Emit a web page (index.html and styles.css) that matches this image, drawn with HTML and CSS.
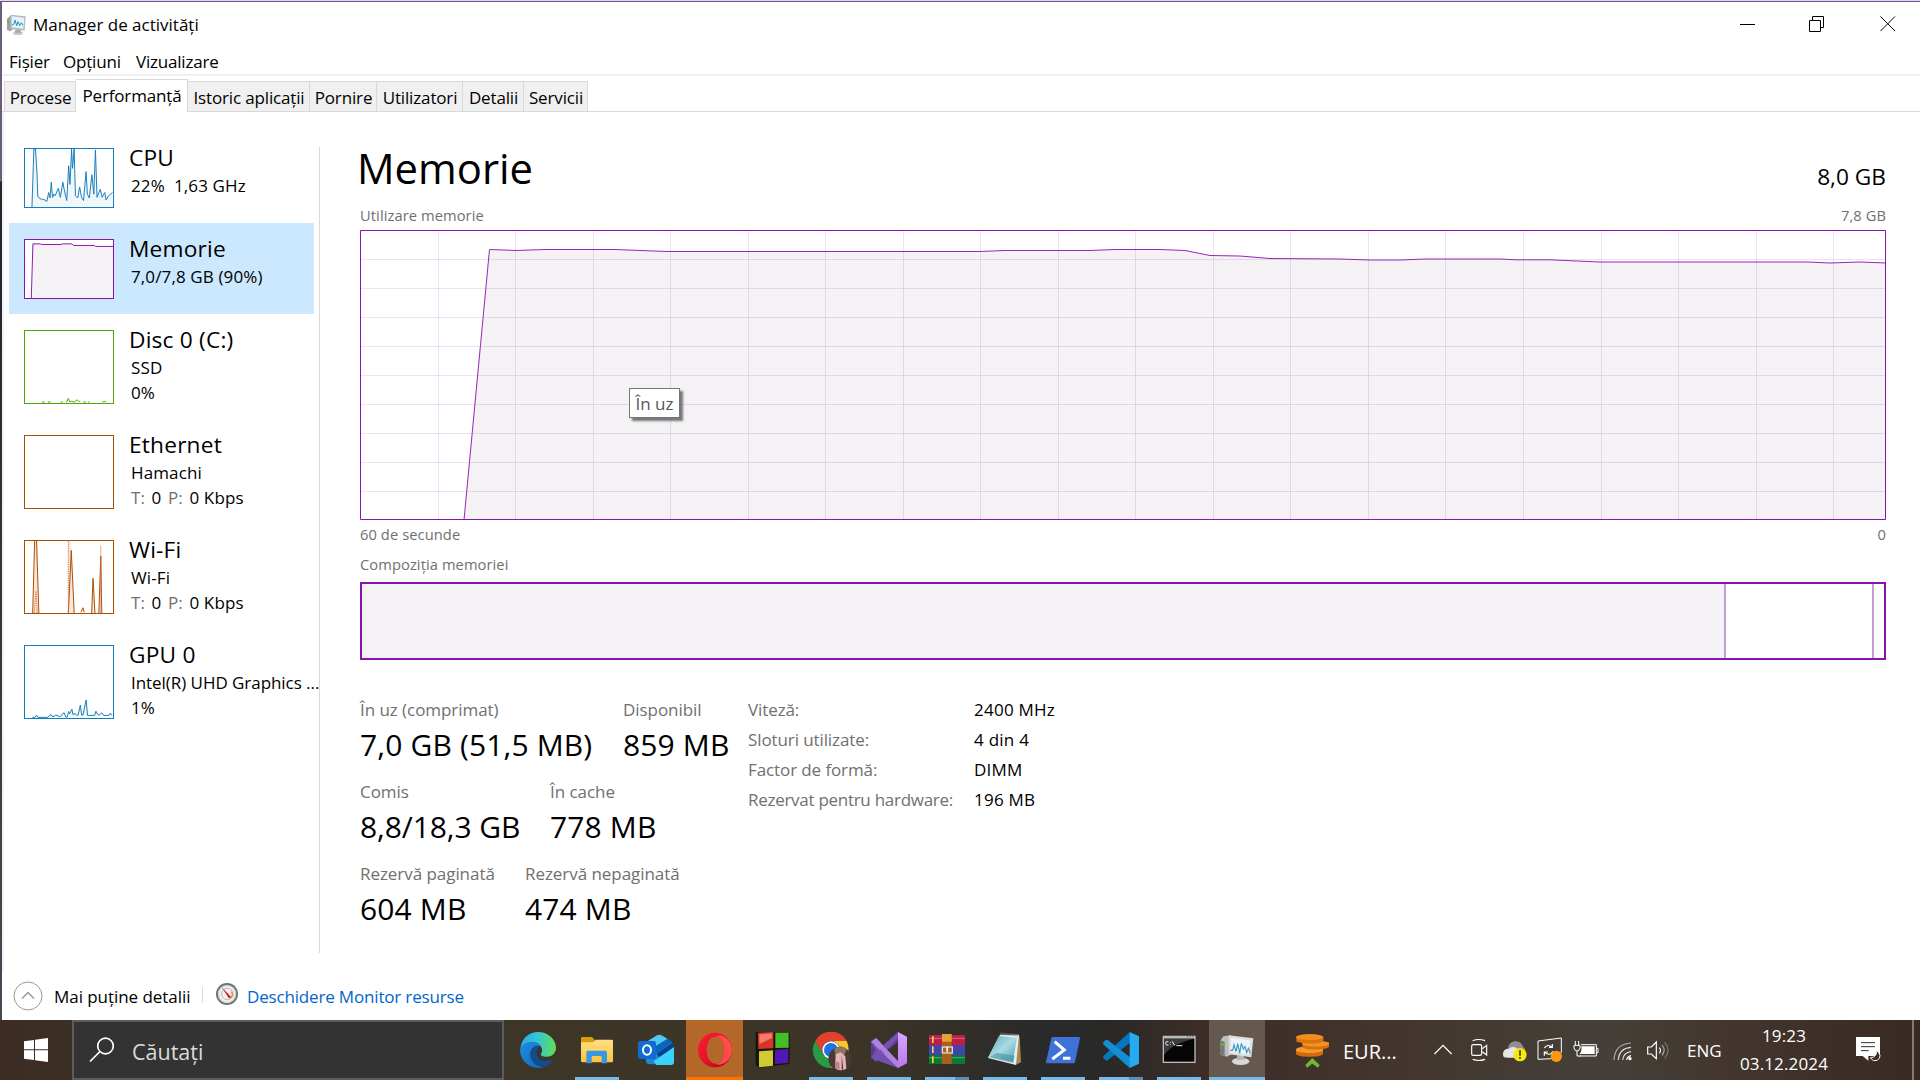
FILE: index.html
```html
<!DOCTYPE html>
<html lang="ro">
<head>
<meta charset="utf-8">
<title>Manager de activități</title>
<link rel="stylesheet" href="styles.css">
</head>
<body>
<svg class="defs" width="0" height="0" aria-hidden="true">
  <defs>
    <linearGradient id="edgeTop" x1="0" x2="1"><stop offset="0" stop-color="#2aa9e8"/><stop offset=".5" stop-color="#35c6d4"/><stop offset="1" stop-color="#62e04c"/></linearGradient>
    <linearGradient id="edgeBlue" x1="0" x2="1" y2="1"><stop offset="0" stop-color="#1f8fe0"/><stop offset="1" stop-color="#0f65bd"/></linearGradient>
    <linearGradient id="folder" y2="1" x2="0"><stop offset="0" stop-color="#ffe084"/><stop offset="1" stop-color="#f8c441"/></linearGradient>
    <linearGradient id="opera" x2="1" y2="1"><stop offset="0" stop-color="#ff1b2d"/><stop offset=".5" stop-color="#e3142b"/><stop offset="1" stop-color="#a70014"/></linearGradient>
    <linearGradient id="vsr" y2="1" x2="0"><stop offset="0" stop-color="#d6a8ff"/><stop offset="1" stop-color="#b877ee"/></linearGradient>
    <linearGradient id="note" x2="1" y2="1"><stop offset="0" stop-color="#5fa9b8"/><stop offset=".5" stop-color="#a9dbe3"/><stop offset="1" stop-color="#4c9dab"/></linearGradient>
    <symbol id="taskmgr" viewBox="0 0 108 108">
      <path d="M5 25l8-12 22-3v58l-12 6-18-6z" fill="#bdbdbd"/><path d="M5 25l12 5v43l-12-6z" fill="#777"/><path d="M6 34h8v7H6z" fill="#57d300"/>
      <ellipse cx="65" cy="88" rx="26" ry="11" fill="#d8d8d6"/><path d="M54 70h20l2 14H54z" fill="#b5b5b2"/>
      <path d="M29 10l74 9-6 57-68-9z" fill="#dededb"/><path d="M36 18l58 7-5 43-54-7z" fill="#e9f5fb"/>
      <path d="M34 55h7l4-17 6 21 5-24 6 29 5-30 6 17 5-7 5 18 5-13 6 15" fill="none" stroke="#3d97c5" stroke-width="3.4"/>
    </symbol>
    <symbol id="taskmgr-small" viewBox="0 0 63 66">
      <path d="M3 14l9-8 8-1v42l-8 5-9-5z" fill="#9d9f9c"/><path d="M4 22h5v5H4z" fill="#57c300"/>
      <ellipse cx="36" cy="57" rx="15" ry="6" fill="#c9c9c6"/><path d="M28 46h15l2 10H27z" fill="#a9a9a6"/>
      <path d="M13 2l46 5-3 43-43-5z" fill="#b8bab8"/><path d="M17 7l38 4-3 33-35-4z" fill="#e3f2fb"/>
      <path d="M17 33l6-2 4-13 5 17 4-12 5 12 5-9 5 8" fill="none" stroke="#2d8fc4" stroke-width="3"/>
    </symbol>
  </defs>
</svg>

<div class="desktop">
  <div class="edge"></div>
  <main class="window">
    <header class="titlebar">
      <svg class="app-icon" width="21" height="22"><use href="#taskmgr-small"/></svg>
      <span class="title">Manager de activități</span>
      <svg class="controls" width="180" height="20" viewBox="0 0 180 20" fill="none" stroke="#000">
        <path d="M0 9.500h15M69.500 5.500h11v11h-11zM72.500 5v-3.500h11v11h-3M140.500 1.500l14.500 14.500M155 1.500l-14.500 14.500"/>
      </svg>
    </header>
    <nav class="menubar"><span>Fișier</span><span>Opțiuni</span><span>Vizualizare</span></nav>
    <nav class="tabs">
      <span class="tab t1">Procese</span><span class="tab t2 active">Performanță</span><span class="tab t3">Istoric aplicații</span><span class="tab t4">Pornire</span><span class="tab t5">Utilizatori</span><span class="tab t6">Detalii</span><span class="tab t7">Servicii</span>
    </nav>

    <div class="content">
      <aside class="sidebar">
        <section class="resource cpu">
          <svg class="thumb" viewBox="0 0 270 180">
            <path d="M20 180L26 0h5l5 80 2 66 6 8 8 2 8 2 6 5 6-28 4 17 4-49 4 47 4-10 4 5 10-23 6 28 8-47 4 22 8 35 6-108 4 58 5-110 3 60 5-60 4 145 7 7 6-34 6 32 6 10 8-90 4 70 6 12 8-72 6 60 5-137 5 147 10-25 6 25 8-15 4 23 8-13 6-5 6-5v45z" class="plot"/>
            <path d="M20 180L26 0h5l5 80 2 66 6 8 8 2 8 2 6 5 6-28 4 17 4-49 4 47 4-10 4 5 10-23 6 28 8-47 4 22 8 35 6-108 4 58 5-110 3 60 5-60 4 145 7 7 6-34 6 32 6 10 8-90 4 70 6 12 8-72 6 60 5-137 5 147 10-25 6 25 8-15 4 23 8-13 6-5 6-5" class="line"/>
          </svg>
          <div class="info"><h2>CPU</h2><p class="pre">22%  1,63 GHz</p></div>
        </section>
        <section class="resource memory selected">
          <svg class="thumb" viewBox="0 0 270 180">
            <path d="M18 180L23 12h22l5 2h60l4-2h30l5 5h65l4 3h54v160z" class="plot"/>
            <path d="M18 180L23 12h22l5 2h60l4-2h30l5 5h65l4 3h54" class="line"/>
          </svg>
          <div class="info"><h2>Memorie</h2><p>7,0/7,8 GB (90%)</p></div>
        </section>
        <section class="resource tall disk">
          <svg class="thumb" viewBox="0 0 270 222"><path d="M52 219h8M70 219h8M109 219h7M125 219l4-2 4-9 4 10 6-1 9 2 8-7 5 5h5M179 219h8M193 219h5M238 219l6-2 6 2" class="line"/></svg>
          <div class="info"><h2>Disc 0 (C:)</h2><p>SSD</p><p>0%</p></div>
        </section>
        <section class="resource tall net">
          <svg class="thumb" viewBox="0 0 270 222"></svg>
          <div class="info"><h2>Ethernet</h2><p>Hamachi</p><p><i>T:</i> 0 <i>P:</i> 0 Kbps</p></div>
        </section>
        <section class="resource tall net">
          <svg class="thumb" viewBox="0 0 270 222">
            <path d="M23 222L29 0h8l6 222zM133 222L133 0h8l10 222zM204 222l5-107 6 107zM226 222l7-200 4 200z" class="plot"/>
            <path d="M23 222L29 0M35 0l7 222M133 222l9-193 9 193M172 220l6-14 4 14M205 222l4-107 6 107M227 222l6-175 3 175" class="line"/>
            <path d="M28 222l5-68 4 68M133 222V0M233 222V14" class="line dotted"/>
          </svg>
          <div class="info"><h2>Wi-Fi</h2><p>Wi-Fi</p><p><i>T:</i> 0 <i>P:</i> 0 Kbps</p></div>
        </section>
        <section class="resource tall gpu">
          <svg class="thumb" viewBox="0 0 270 222">
            <path d="M22 220h8l5-7 4 7h30l10-9 6 8 8-5h8l4 5 6-4 4-6 5-3 5 13 4 1 5-18 3 7 7-14 3 16 7-3 4 5h5l7-31 4 31h4l10-47 4 48h22l4-13 5 9 5 3 8-7 6 8h16l5-7 3 7" class="plot"/>
            <path d="M22 220h8l5-7 4 7h30l10-9 6 8 8-5h8l4 5 6-4 4-6 5-3 5 13 4 1 5-18 3 7 7-14 3 16 7-3 4 5h5l7-31 4 31h4l10-47 4 48h22l4-13 5 9 5 3 8-7 6 8h16l5-7 3 7" class="line"/>
          </svg>
          <div class="info"><h2>GPU 0</h2><p class="device">Intel(R) UHD Graphics ...</p><p>1%</p></div>
        </section>
      </aside>

      <article class="detail">
        <div class="heading"><h1>Memorie</h1><span>8,0 GB</span></div>
        <div class="caption"><span>Utilizare memorie</span><span>7,8 GB</span></div>
        <div class="chart">
          <svg width="1526" height="290" viewBox="0 0 1526 290" fill="none">
            <path fill="#f4f2f5" d="M104 290L129.500 19.500 156 20.500l29-1h70l52 2h313l25-1h85l25-1h45l25 1 25 5 30 .5 30 2.500 70 .5 30 1h30l25-1h75l17 .8h33l50 2.200h208l22 1 30-1 26 1V290z"/>
            <path class="grid" d="M78.500 0v290M155.500 0v290M233.500 0v290M310.500 0v290M388.500 0v290M465.500 0v290M543.500 0v290M620.500 0v290M698.500 0v290M775.500 0v290M853.500 0v290M930.500 0v290M1008.500 0v290M1085.500 0v290M1163.500 0v290M1241.500 0v290M1318.500 0v290M1396.500 0v290M1473.500 0v290M0 29.500h1526M0 58.500h1526M0 87.500h1526M0 116.500h1526M0 145.500h1526M0 174.500h1526M0 203.500h1526M0 232.500h1526M0 261.500h1526"/>
            <path stroke="#9528b4" d="M104 290L129.500 19.500 156 20.500l29-1h70l52 2h313l25-1h85l25-1h45l25 1 25 5 30 .5 30 2.500 70 .5 30 1h30l25-1h75l17 .8h33l50 2.200h208l22 1 30-1 26 1"/>
            <path stroke="#8b12ae" d="M.5.5h1525v289H.5z"/>
          </svg>
          <div class="tooltip">În uz</div>
        </div>
        <div class="caption axis"><span>60 de secunde</span><span>0</span></div>
        <div class="caption comp"><span>Compoziția memoriei</span></div>
        <div class="composition"><div class="used"></div><div class="standby"></div></div>
        <div class="stats">
          <div class="big">
            <div class="pair"><dl class="w1"><dt>În uz (comprimat)</dt><dd>7,0 GB (51,5 MB)</dd></dl><dl><dt>Disponibil</dt><dd>859 MB</dd></dl></div>
            <div class="pair"><dl class="w2"><dt>Comis</dt><dd class="commit">8,8/18,3 GB</dd></dl><dl><dt>În cache</dt><dd>778 MB</dd></dl></div>
            <div class="pair"><dl class="w3"><dt>Rezervă paginată</dt><dd>604 MB</dd></dl><dl><dt>Rezervă nepaginată</dt><dd>474 MB</dd></dl></div>
          </div>
          <div class="small">
            <span>Viteză:</span><b>2400 MHz</b>
            <span>Sloturi utilizate:</span><b>4 din 4</b>
            <span>Factor de formă:</span><b>DIMM</b>
            <span class="long">Rezervat pentru hardware:</span><b>196 MB</b>
          </div>
        </div>
      </article>
    </div>

    <footer class="footer">
      <svg class="collapse" width="30" height="30" viewBox="0 0 30 30" fill="none"><circle cx="15" cy="15" r="14" stroke="#979797"/><path d="M9 17.500l6-6 6 6" stroke="#979797" stroke-width="1.500"/></svg>
      <span class="less">Mai puține detalii</span>
      <span class="divider"></span>
      <svg class="gauge" width="24" height="24" viewBox="0 0 72 72"><circle cx="36" cy="36" r="33" fill="#68716f"/><circle cx="36" cy="36" r="28" fill="#ccd0ce"/><circle cx="36" cy="36" r="24" fill="#f3f0ed"/><circle cx="37" cy="36" r="17" fill="none" stroke="#b9b9b7" stroke-width="3"/><path d="M49 29q8 10-3 20" fill="none" stroke="#f08a2c" stroke-width="4"/><path d="M19 14l29 31-6 4z" fill="#c90f1a"/></svg>
      <a>Deschidere Monitor resurse</a>
    </footer>
  </main>
</div>

<div class="taskbar">
  <div class="start"><svg width="24" height="24" viewBox="0 0 24 24" fill="#fff"><path d="M0 3.300L10 2v9.300H0zM11 1.800L24 0v11.300H11zM0 12.300h10V22L0 20.700zM11 12.300h13V24L11 22.200z"/></svg></div>
  <div class="search">
    <svg width="26" height="26" viewBox="0 0 26 26" fill="none" stroke="#fff" stroke-width="1.700"><circle cx="16.500" cy="9" r="7.800"/><path d="M11 14.500L1 24.500"/></svg>
    <span>Căutați</span>
  </div>
  <div class="apps">
    <div class="app wide"><svg viewBox="0 0 108 108">
      <path d="M1 50C4 20 26 0 54 0c32 0 54 24 54 47 0 17-13 27-28 27-13 0-19-4-17-9 5-5 5-17-4-25C45 26 14 27 1 50z" fill="url(#edgeTop)"/>
      <path d="M0 56c0-15 17-27 35-27 15 0 24 6 27 13-17-3-31 8-31 25 0 24 22 40 45 37-33 14-74-9-76-48z" fill="url(#edgeBlue)"/>
      <path d="M52 41c-14 2-22 13-21 27 1 22 22 38 43 36 12-4 21-12 27-22-20 10-48 5-51-16-1-8 0-15 9-22-2-2-4-3-7-3z" fill="#134d8e"/></svg></div>
    <div class="app wide run"><svg viewBox="0 0 108 108"><path d="M6 18q0-3 4-3h29l8 9v12H6z" fill="#db9b0c"/><path d="M6 31h36l8-8h48q4 0 4 4v60q0 4-4 4H10q-4 0-4-4z" fill="url(#folder)"/><path d="M22 94V62q0-6 6-6h50q6 0 6 6v32H68V76q0-4-4-4H42q-4 0-4 4v18z" fill="#3a96dd"/></svg></div>
    <div class="app wide"><svg viewBox="0 0 108 108"><path d="M21 35L64 9l44 30v48q0 10-10 10H36q-12 0-12-10z" fill="#2484dc"/><path d="M28 28L57 10q8-4 16 1l16 10-49 31z" fill="#54c7ef"/><path d="M45 47l44-27 15 11-47 33z" fill="#0866bd"/><path d="M55 66l49-34q4 3 4 9v7L64 76z" fill="#093e89"/><path d="M47 88l61-43v45q0 9-9 9H55z" fill="#3bd1fa"/><rect y="27" width="54" height="54" rx="7" fill="#0f6cd4"/><ellipse cx="27" cy="54" rx="12" ry="14" fill="none" stroke="#fff" stroke-width="6"/></svg></div>
    <div class="app hot"><svg viewBox="0 0 108 108"><path fill="url(#opera)" fill-rule="evenodd" d="M54 2C24 2 3 26 3 54s21 52 51 52 51-24 51-52S84 2 54 2zm2 12c18 0 25 20 25 40S74 95 56 95 29 75 29 54s9-40 27-40z"/><path fill="#ff4b4b" d="M56 14c18-12 49 9 49 40S74 106 56 95c18 0 25-20 25-41S74 14 56 14z"/></svg></div>
    <div class="app"><svg viewBox="0 0 108 108"><path d="M2 0l102 2v93L12 108 2 98z" fill="#15150f"/><path d="M9 2l46-2v49L10 51z" fill="#db3328"/><path d="M61 2h40v45l-40 1z" fill="#45bd27"/><path d="M12 58l42-3v46l-42 5z" fill="#d2ca33"/><path d="M60 54l40-3v42l-40 3z" fill="#5318b4"/><path d="M13 7l38-3v14L13 36z" fill="#f47b6b"/></svg></div>
    <div class="app run"><svg viewBox="0 0 108 108"><path d="M7 27A54 54 0 0 1 101 27H54a27 27 0 0 0-25 38z" fill="#e44030"/><path d="M7 27a54 54 0 0 0 47 81l24-42a27 27 0 0 1-49-2z" fill="#299b47"/><path d="M101 27H54a27 27 0 0 1 24 40l-24 41c45-2 63-46 47-81z" fill="#fbc72d"/><circle cx="54" cy="54" r="26" fill="#fff"/><circle cx="54" cy="54" r="21" fill="#1a73e8"/><circle cx="81" cy="80" r="35" fill="#493a34"/><path d="M64 51q20-16 37 0l-8 20-8-7-17 8z" fill="#8f765e"/><path d="M68 67l15-6 14 12 3 37q-20 10-34-2z" fill="#dfb8b7"/><path d="M66 88l13 3 1 22-14-5z" fill="#c77c98"/><path d="M86 67l5 45-5 2z" fill="#6b2f3c"/></svg></div>
    <div class="app run"><svg viewBox="0 0 108 108"><path d="M0 29l13-7 68 66v20L0 79z" fill="#7350ac"/><path d="M0 79V29l15 25zM81 0L41 38l14 13 26-22z" fill="#5c3c91"/><path d="M0 29l15-11 66 70v20L0 29z" fill="#a77be2"/><path d="M15 89L81 18V0L40 37 5 80z" fill="#7651b4"/><path d="M4 28l12-9 66 71v18z" fill="#ae81e5"/><path d="M81 0l27 14v80l-27 14z" fill="url(#vsr)"/></svg></div>
    <div class="app run stacked"><svg viewBox="0 0 108 108"><path d="M0 9h108v30H0z" fill="#bd1e43"/><path d="M0 39h108v30H0z" fill="#4343ad"/><path d="M0 69h108v27H0z" fill="#087a35"/><path d="M0 17h108v4H0zM0 75h108v4H0z" fill="#ffffff44"/><path d="M9 13h5v20H9zM9 43h5v20H9zM9 73h5v20H9z" fill="#f5d33c"/><path d="M39 6h29v90H39z" fill="#ac5f19"/><path d="M39 6h29v23H39z" fill="#dda635"/><rect x="40" y="45" width="30" height="18" fill="none" stroke="#ddd" stroke-width="4"/><path d="M52 45h5v14h-5z" fill="#fff"/></svg></div>
    <div class="app run"><svg viewBox="0 0 108 108"><path d="M98 12l4 79-16 8-5-80z" fill="#a9874d"/><path d="M39 8h57l-9 91L3 78z" fill="#e8eff0"/><path d="M36 12l54 5-12 72L4 76z" fill="url(#note)"/><path d="M30 62l53 9-4 23-71-18z" fill="#3d8f9c88"/><path d="M41 5l54 5" stroke="#777" stroke-width="7" stroke-dasharray="3 3"/></svg></div>
    <div class="app run"><svg viewBox="0 0 108 108"><path d="M24 15h78q4 0 3 4L90 90q-1 4-5 4H6q-4 0-3-4l16-71q1-4 5-4z" fill="#3f72d9"/><path d="M29 29l29 25-36 27M54 79h22" fill="none" stroke="#fff" stroke-width="9"/></svg></div>
    <div class="app run stacked"><svg viewBox="0 0 108 108"><path d="M80 0L2 71q-4 4 0 8l5 5q4 3 8 0l68-53z" fill="#0676bd"/><path d="M80 108L2 38q-4-4 0-8l5-5q4-3 8 0l68 52z" fill="#138ed5"/><path d="M80 0l28 13v82l-28 13z" fill="#28aaf2"/></svg></div>
    <div class="app run"><svg viewBox="0 0 108 108"><path d="M5 11h99v82H5z" fill="#b9bbba"/><path d="M9 20h91v69H9z" fill="#050505"/><path d="M9 20h91C65 28 26 42 9 70z" fill="#3c3c3c"/><path d="M22 29h-5q-3 0-3 5t3 5h5M28 30v2M28 37v2M33 28l8 12M46 41h18" fill="none" stroke="#eee" stroke-width="3"/><path d="M78 13h3v3h-3zM86 13h3v3h-3zM94 13h3v3h-3z" fill="#555"/></svg></div>
    <div class="app current"><svg><use href="#taskmgr"/></svg></div>
  </div>
  <div class="news">
    <svg width="36" height="36" viewBox="0 0 108 108"><path d="M3 52v15c8 10 75 10 81 0V49z" fill="#d66a0b"/><ellipse cx="44" cy="53" rx="41" ry="10" fill="#f59a2b"/><path d="M22 34v12c9 10 75 8 80-2V31z" fill="#d4700d"/><ellipse cx="62" cy="35" rx="40" ry="9" fill="#ef9427"/><path d="M4 15v13c12 9 73 9 81 0V14z" fill="#dd730b"/><ellipse cx="44" cy="15" rx="41" ry="9" fill="#f28d1e"/><path d="M52 78l22 21-5 8-17-12-16 12-5-8z" fill="#72b62b"/></svg>
    <span>EUR...</span>
  </div>
  <div class="tray">
    <svg class="chevron" width="18" height="36" viewBox="0 0 54 108" fill="none" stroke="#fff" stroke-width="4"><path d="M1 66l26-26 26 26"/></svg>
    <svg class="camera" width="18" height="36" viewBox="0 0 54 108" fill="none" stroke="#fff" stroke-width="3.500"><rect x="5" y="38" width="30" height="32" rx="5"/><path d="M37 50l13-10v29l-13-10M8 26q17-7 37 0M8 82q17 7 37 0"/></svg>
    <svg class="cloud" width="26" height="36" viewBox="0 0 78 108"><path d="M18 50c3-29 40-29 46-4 9 6 8 22-3 27H16C-2 72 1 51 18 50z" fill="#909090"/><path d="M3 68c0-16 15-19 18-17 10-12 27-4 29 8 5 17-10 18-13 18H16C8 77 3 75 3 68z" fill="#e5e5e5"/><circle cx="54" cy="68" r="20" fill="#f7e710"/><path d="M54 55v16M54 75v5" stroke="#111" stroke-width="4"/></svg>
    <svg class="update" width="25" height="36" viewBox="0 0 75 108"><path d="M44 80L3 82V27l70-9v45" fill="none" stroke="#fff" stroke-width="3"/><path d="M22 48q10-14 24-2M46 36v10H36M48 58q-10 16-25 3M22 71V60h11" fill="none" stroke="#fff" stroke-width="3.500"/><circle cx="58" cy="73" r="17" fill="#ff9712"/></svg>
    <svg class="battery" width="26" height="36" viewBox="0 0 78 108" fill="none" stroke="#fff" stroke-width="3"><path d="M7 27v12M17 27v12M3 40h18v8q-2 9-9 9t-9-9zM12 57v15h12M24 38h46v34H20M71 49h4v13h-4"/><path d="M25 43h40v23H20q7-8 5-23z" fill="#fff" stroke="none"/></svg>
    <svg class="wifi" width="20" height="36" viewBox="0 0 60 108" fill="none" stroke-width="3.500"><path d="M3 84q2-48 51-51" stroke="#aaa"/><path d="M16 84q2-35 38-38M29 84q2-22 25-25" stroke="#ddd"/><path d="M41 84q1-10 13-13" stroke="#fff"/><circle cx="51" cy="80" r="5" fill="#fff"/></svg>
    <svg class="volume" width="23" height="36" viewBox="0 0 69 108" fill="none" stroke="#fff" stroke-width="3.500"><path d="M2 45h11l15-15v50L13 66H2zM37 47q7 9 0 17"/><path d="M45 39q13 16 0 31" stroke="#aaa"/><path d="M53 31q21 24 0 48" stroke="#777"/></svg>
    <span class="lang">ENG</span>
    <div class="clock"><span>19:23</span><span>03.12.2024</span></div>
    <svg class="notice" width="26" height="26" viewBox="0 0 78 78"><path d="M0 0h72v57H37v14L20 57H0z" fill="#fff"/><path d="M15 17h42M15 29h42M15 41h23" stroke="#3b2c26" stroke-width="3"/><path d="M60 39q6 20-17 24 8 12 21 7 18-14-4-31z" fill="#3b2c26" stroke="#fff" stroke-width="3"/></svg>
    <span class="peek"></span>
  </div>
</div>
</body>
</html>
```
FILE: styles.css
```css
* { box-sizing: border-box; }
body {
  margin: 0;
  width: 1920px;
  height: 1080px;
  overflow: hidden;
  display: flex;
  flex-direction: column;
  font-family: "Open Sans", "Noto Sans", sans-serif;
  font-size: 17px;
  color: #000;
  background: #fff;
  white-space: nowrap;
}
h1, h2, p, dl, dt, dd { margin: 0; font-weight: 400; }
svg { display: block; flex: none; }
.defs { position: absolute; }

/* window frame */
.desktop { height: 1020px; display: flex; border-top: 1px solid #e6d6fa; }
.edge { width: 2px; background: linear-gradient(#6b5c78 0 180px, #23272e 181px 280px, #454b54); }
.window { flex: 1; display: flex; flex-direction: column; border-top: 1px solid #6b5685; }

.titlebar { height: 43px; display: flex; align-items: center; padding: 2px 0 0 4px; }
.title { margin-left: 6px; line-height: 26px; }
.controls { align-self: flex-start; margin: 11px 0 0 auto; }

.menubar { height: 31px; display: flex; gap: 14px; padding-left: 7px; line-height: 33px; letter-spacing: -.2px; border-bottom: 2px solid #f0f0f0; }
.menubar span:nth-child(1) { width: 40px; }
.menubar span:nth-child(2) { width: 59px; }

.tabs { height: 36px; display: flex; align-items: flex-end; padding-left: 2px; letter-spacing: -.15px; border-bottom: 1px solid #d9d9d9; }
.tab { height: 30px; line-height: 31px; padding-left: 1px; background: #f0f0f0; border: 1px solid #d9d9d9; border-width: 1px 1px 0 0; text-align: center; }
.tab.active { height: 33px; margin-bottom: -1px; background: #fff; }
.t1 { width: 72px; border-left-width: 1px; }
.t2 { width: 112px; }
.t3 { width: 122px; }
.t4 { width: 67px; }
.t5 { width: 86px; }
.t6 { width: 61px; }
.t7 { width: 64px; }

/* resource list */
.content { flex: 1; display: flex; border-left: 2px solid #f3f3f3; }
.sidebar { width: 315px; padding: 20px 0 0 5px; }
.resource { display: flex; height: 91px; width: 305px; padding: 16px 0 0 15px; gap: 15px; }
.resource.tall { height: 105px; }
.resource.selected { background: #cce8ff; }
.thumb { width: 90px; height: 60px; border: 1px solid currentColor; background: #fff; overflow: hidden; }
.tall .thumb { height: 74px; }
.thumb .line { fill: none; stroke: currentColor; stroke-width: 3; }
.thumb .plot { stroke: none; fill: #f1f6fa; }
.cpu, .gpu { color: #117dbb; }
.memory { color: #8b12ae; }
.memory .plot { fill: #f4f2f5; }
.disk { color: #4da60c; }
.net { color: #a74f01; }
.net .plot { fill: #fbe5d8; }
.thumb .dotted { stroke: #dc6d44; stroke-dasharray: 4 3; }
.info { color: #000; margin-top: -5px; width: 186px; }
.info h2 { font-size: 22.700px; line-height: 30px; letter-spacing: .2px; }
.info p { font-size: 17px; line-height: 25px; padding-left: 2px; letter-spacing: .12px; }
.info .device { letter-spacing: -.05px; }
.info i { font-style: normal; color: #707070; margin-right: 2px; }
.info i + i { margin-left: 2px; }
.pre { white-space: pre; }

/* memory panel */
.detail { width: 1567px; height: 806px; margin-top: 35px; border-left: 1px solid #d9d9d9; padding-left: 40px; }
.heading { height: 53px; display: flex; justify-content: space-between; }
.heading h1 { font-size: 41.800px; line-height: 41px; margin-left: -3px; }
.heading span { font-size: 22.700px; line-height: 60px; }
.caption { display: flex; justify-content: space-between; font-size: 14.700px; color: #707070; height: 30px; line-height: 30px; letter-spacing: .08px; }
.chart { height: 290px; position: relative; }
.grid { stroke: #8b12ae; stroke-opacity: .13; }
.tooltip { position: absolute; left: 269px; top: 158px; width: 51px; height: 30px; line-height: 30px; text-align: center; color: #575757; background: #fff; border: 1px solid #767676; box-shadow: 3px 3px 2px #777; }
.axis { height: 29px; line-height: 28px; }
.comp { height: 33px; line-height: 31px; }
.composition { height: 78px; border: 2px solid #8b12ae; display: flex; width: 1526px; }
.used { width: 1364px; background: #f4f2f5; border-right: 2px solid #c59bd5; }
.standby { width: 148px; border-right: 2px solid #c59bd5; }
.stats { display: flex; padding-top: 36px; }
.big { width: 388px; }
.pair { display: flex; height: 82px; }
.w1 { width: 263px; }
.w2 { width: 190px; }
.w3 { width: 165px; }
dt { color: #707070; font-size: 17px; line-height: 28px; letter-spacing: -.05px; }
dd { font-size: 30px; line-height: 42px; letter-spacing: .15px; }
.commit { letter-spacing: -.1px; }
.small { display: grid; grid-template-columns: 226px 120px; grid-auto-rows: 30px; line-height: 28px; align-content: start; }
.small span { color: #707070; letter-spacing: -.1px; }
.small .long { letter-spacing: -.28px; }
.small b { font-weight: 400; letter-spacing: .25px; }

.footer { height: 49px; display: flex; padding-left: 11px; line-height: 52px; }
.collapse { margin-top: 10px; }
.less { margin-left: 11px; width: 148px; letter-spacing: -.05px; }
.divider { width: 1px; height: 16px; margin-top: 16px; background: #d9d9d9; }
.gauge { margin: 11px 8px 0 12px; }
.footer a { color: #0066cc; letter-spacing: -.17px; }

/* taskbar */
.taskbar { height: 60px; display: flex; color: #fff; background: linear-gradient(90deg, #3c2c24 0, #3b3025 72px, #3d3526 510px, #3c3427 870px, #292a2a 1040px, #2a2928 1110px, #3c2d27 1200px, #43362e 1400px, #444039 1600px, #43372f 1720px, #392923 1920px); }
.start { width: 72px; display: flex; align-items: center; padding-left: 24px; }
.search { width: 432px; border: 2px solid #5c5c5c; background: #333; display: flex; align-items: center; padding-left: 15px; font-size: 21.500px; color: #dcdcdc; }
.search span { margin-left: 17px; padding-top: 2px; }
.apps { display: flex; flex: none; margin-left: 4px; }
.app { flex: none; width: 58px; height: 60px; display: flex; align-items: center; justify-content: center; }
.app.wide { width: 59px; }
.app svg { width: 36px; height: 36px; overflow: visible; }
.app.run { background: linear-gradient(#76b9ed, #76b9ed) center bottom / 44px 3px no-repeat; }
.app.stacked { background: linear-gradient(90deg, #76b9ed 30px, #5b8db5 30px) center bottom / 44px 3px no-repeat; }
.app.hot { width: 57px; margin: 0 1px; background: #b36829; border-bottom: 3px solid #ff7200; padding-top: 3px; }
.app.current { width: 56px; margin: 0 1px; background: #65584f; border-bottom: 3px solid #76b9ed; padding-top: 3px; }
.news { flex: none; display: flex; align-items: center; margin-left: 29px; width: 139px; font-size: 20px; }
.news span { margin-left: 12px; padding-top: 2px; }
.tray { display: flex; align-items: center; flex: 1; }
.chevron { margin-right: 18px; }
.camera { margin-right: 14px; }
.cloud { margin-right: 9px; }
.update { margin-right: 11px; }
.battery { margin-right: 14px; }
.wifi { margin-right: 14px; }
.volume { margin-right: 17px; }
.lang { width: 34px; font-size: 17px; }
.clock { display: flex; flex-direction: column; text-align: center; width: 90px; margin-left: 18px; line-height: 28px; font-size: 17px; letter-spacing: .15px; }
.notice { margin-left: 27px; }
.peek { width: 2px; height: 60px; margin-left: auto; margin-right: 6px; background: #847a74; }
```
